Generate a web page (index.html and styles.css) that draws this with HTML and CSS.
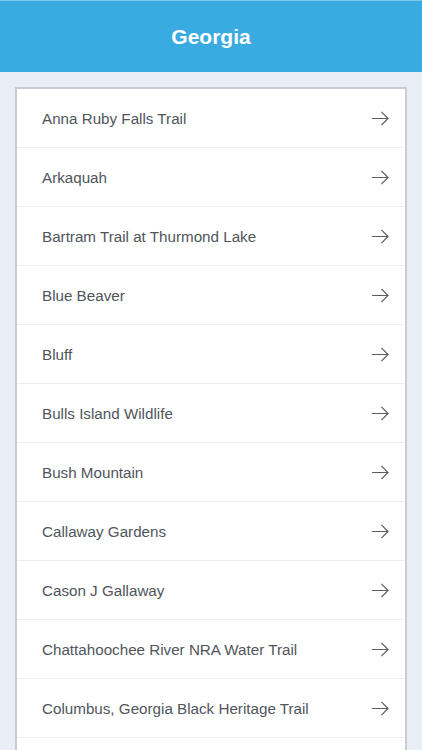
FILE: index.html
```html
<!DOCTYPE html>
<html>
<head>
<meta charset="utf-8">
<link rel="stylesheet" href="styles.css">
</head>
<body>
<header class="topbar"><h1 class="title">Georgia</h1></header>
<main class="content">
  <ul class="list">
    <li class="row"><span class="label">Anna Ruby Falls Trail</span><svg class="arrow" viewBox="0 0 20 16"><path d="M1 8H18M11 1L18 8L11 15"/></svg></li>
    <li class="row"><span class="label">Arkaquah</span><svg class="arrow" viewBox="0 0 20 16"><path d="M1 8H18M11 1L18 8L11 15"/></svg></li>
    <li class="row"><span class="label">Bartram Trail at Thurmond Lake</span><svg class="arrow" viewBox="0 0 20 16"><path d="M1 8H18M11 1L18 8L11 15"/></svg></li>
    <li class="row"><span class="label">Blue Beaver</span><svg class="arrow" viewBox="0 0 20 16"><path d="M1 8H18M11 1L18 8L11 15"/></svg></li>
    <li class="row"><span class="label">Bluff</span><svg class="arrow" viewBox="0 0 20 16"><path d="M1 8H18M11 1L18 8L11 15"/></svg></li>
    <li class="row"><span class="label">Bulls Island Wildlife</span><svg class="arrow" viewBox="0 0 20 16"><path d="M1 8H18M11 1L18 8L11 15"/></svg></li>
    <li class="row"><span class="label">Bush Mountain</span><svg class="arrow" viewBox="0 0 20 16"><path d="M1 8H18M11 1L18 8L11 15"/></svg></li>
    <li class="row"><span class="label">Callaway Gardens</span><svg class="arrow" viewBox="0 0 20 16"><path d="M1 8H18M11 1L18 8L11 15"/></svg></li>
    <li class="row"><span class="label">Cason J Gallaway</span><svg class="arrow" viewBox="0 0 20 16"><path d="M1 8H18M11 1L18 8L11 15"/></svg></li>
    <li class="row"><span class="label">Chattahoochee River NRA Water Trail</span><svg class="arrow" viewBox="0 0 20 16"><path d="M1 8H18M11 1L18 8L11 15"/></svg></li>
    <li class="row"><span class="label">Columbus, Georgia Black Heritage Trail</span><svg class="arrow" viewBox="0 0 20 16"><path d="M1 8H18M11 1L18 8L11 15"/></svg></li>
    <li class="row"></li>
  </ul>
</main>
</body>
</html>
```
FILE: styles.css
```css
html, body {
  margin: 0;
  padding: 0;
  background: #e9eef5;
  font-family: "Liberation Sans", Arial, sans-serif;
  height: 750px;
  overflow: hidden;
}
.topbar {
  height: 71px;
  background: #3aabe1;
  border-top: 1px solid #7cc9ef;
  display: flex;
  align-items: center;
  justify-content: center;
}
.title {
  margin: 0;
  color: #ffffff;
  font-size: 21px;
  font-weight: bold;
}
.content {
  padding: 15px 15px 0 15px;
}
.list {
  list-style: none;
  margin: 0;
  padding: 0;
  background: #ffffff;
  border: 2px solid #c9cdd3;
  border-bottom: none;
}
.row {
  height: 58px;
  border-bottom: 1px solid #eceef1;
  display: flex;
  align-items: center;
  justify-content: space-between;
  padding: 0 15px 0 25px;
}
.label {
  font-size: 15.2px;
  color: #50555c;
}
.arrow {
  width: 19px;
  height: 15px;
  fill: none;
  stroke: #5a5e64;
  stroke-width: 1.3;
}
```
